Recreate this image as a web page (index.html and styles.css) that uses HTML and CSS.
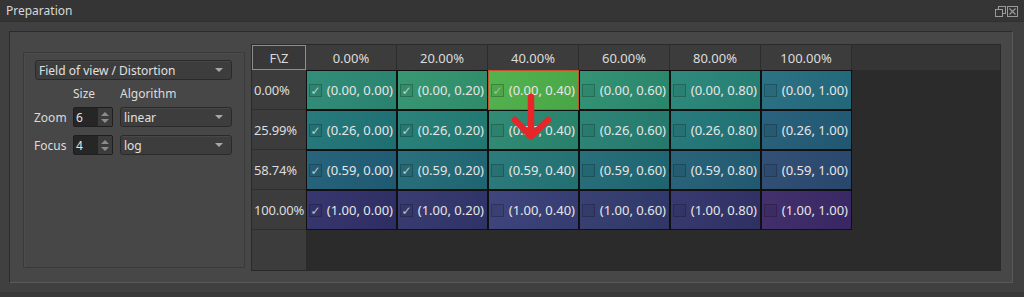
FILE: index.html
```html
<!DOCTYPE html>
<html lang="en">
<head>
    <meta charset="UTF-8">
    <title>Preparation</title>
    <link rel="stylesheet" href="styles.css">
</head>
<body>
<div class="dock">
    <div class="title-bar">
        <span class="title">Preparation</span>
        <div class="title-btns">
            <svg width="11" height="11" viewBox="0 0 11 11"><rect x="3.5" y="0.5" width="7" height="7" fill="none" stroke="#9a9a9a"/><rect x="0.5" y="3.5" width="7" height="7" fill="#353535" stroke="#9a9a9a"/></svg>
            <svg width="11" height="11" viewBox="0 0 11 11"><rect x="0.5" y="0.5" width="10" height="10" fill="none" stroke="#9a9a9a"/><path d="M2.5 2.5 L8.5 8.5 M8.5 2.5 L2.5 8.5" stroke="#9a9a9a" stroke-width="1.2"/></svg>
        </div>
    </div>
    <div class="dock-body">
        <div class="frame">
            <!-- settings -->
            <div class="group">
                <div class="combo wide"><span>Field of view / Distortion</span><i class="caret"></i></div>
                <div class="row head">
                    <span class="lbl"></span>
                    <span class="head-size">Size</span>
                    <span>Algorithm</span>
                </div>
                <div class="row zoom">
                    <span class="lbl">Zoom</span>
                    <div class="spin"><span>6</span><div class="spin-btns"><i class="up"></i><i class="down"></i></div></div>
                    <div class="combo"><span>linear</span><i class="caret"></i></div>
                </div>
                <div class="row focus">
                    <span class="lbl">Focus</span>
                    <div class="spin"><span>4</span><div class="spin-btns"><i class="up"></i><i class="down"></i></div></div>
                    <div class="combo"><span>log</span><i class="caret"></i></div>
                </div>
            </div>

            <!-- grid of previews -->
            <div class="table-view">
                <div class="corner">F\Z</div>
                <div class="hcell">0.00%</div>
                <div class="hcell">20.00%</div>
                <div class="hcell">40.00%</div>
                <div class="hcell">60.00%</div>
                <div class="hcell">80.00%</div>
                <div class="hcell">100.00%</div>
                <div class="hfill"></div>

                <div class="rhead">0.00%</div>
                <div class="cell" style="--c:#2b8a74"><i class="chk on">✓</i><span>(0.00, 0.00)</span></div>
                <div class="cell" style="--c:#31946e"><i class="chk on">✓</i><span>(0.00, 0.20)</span></div>
                <div class="cell sel" style="--c:#4db04a"><i class="chk on dim">✓</i><span>(0.00, 0.40)</span></div>
                <div class="cell" style="--c:#2c8e70"><i class="chk"></i><span>(0.00, 0.60)</span></div>
                <div class="cell" style="--c:#278578"><i class="chk"></i><span>(0.00, 0.80)</span></div>
                <div class="cell" style="--c:#246d80"><i class="chk"></i><span>(0.00, 1.00)</span></div>
                <div class="fill"></div>

                <div class="rhead">25.99%</div>
                <div class="cell" style="--c:#1f7578"><i class="chk on">✓</i><span>(0.26, 0.00)</span></div>
                <div class="cell" style="--c:#227e76"><i class="chk on">✓</i><span>(0.26, 0.20)</span></div>
                <div class="cell" style="--c:#2a8870"><i class="chk"></i><span>(0.26, 0.40)</span></div>
                <div class="cell" style="--c:#268072"><i class="chk"></i><span>(0.26, 0.60)</span></div>
                <div class="cell" style="--c:#217678"><i class="chk"></i><span>(0.26, 0.80)</span></div>
                <div class="cell" style="--c:#225c78"><i class="chk"></i><span>(0.26, 1.00)</span></div>
                <div class="fill"></div>

                <div class="rhead">58.74%</div>
                <div class="cell" style="--c:#205e78"><i class="chk on">✓</i><span>(0.59, 0.00)</span></div>
                <div class="cell" style="--c:#216a78"><i class="chk on">✓</i><span>(0.59, 0.20)</span></div>
                <div class="cell" style="--c:#247678"><i class="chk"></i><span>(0.59, 0.40)</span></div>
                <div class="cell" style="--c:#206a76"><i class="chk"></i><span>(0.59, 0.60)</span></div>
                <div class="cell" style="--c:#225e76"><i class="chk"></i><span>(0.59, 0.80)</span></div>
                <div class="cell" style="--c:#2b4a72"><i class="chk"></i><span>(0.59, 1.00)</span></div>
                <div class="fill"></div>

                <div class="rhead">100.00%</div>
                <div class="cell" style="--c:#30306a"><i class="chk on">✓</i><span>(1.00, 0.00)</span></div>
                <div class="cell" style="--c:#32356c"><i class="chk on">✓</i><span>(1.00, 0.20)</span></div>
                <div class="cell" style="--c:#383f78"><i class="chk"></i><span>(1.00, 0.40)</span></div>
                <div class="cell" style="--c:#323a6e"><i class="chk"></i><span>(1.00, 0.60)</span></div>
                <div class="cell" style="--c:#31336a"><i class="chk"></i><span>(1.00, 0.80)</span></div>
                <div class="cell" style="--c:#3b2968"><i class="chk"></i><span>(1.00, 1.00)</span></div>
                <div class="fill"></div>

                <div class="rhead empty"></div>

                <svg class="arrow" width="46" height="56" viewBox="0 0 46 56">
                    <path d="M21 7 V46 M5 30 L21 46.5 L38 30" fill="none" stroke="#e8262a" stroke-width="6.5" stroke-linecap="round" stroke-linejoin="round"/>
                </svg>
            </div>
        </div>
    </div>
</div>
</body>
</html>
```

FILE: styles.css
```css
*{margin:0;padding:0;box-sizing:border-box;}
html,body{width:1024px;height:297px;overflow:hidden;}
body{
    background:#393939;
    font-family:"Noto Sans","DejaVu Sans",sans-serif;
    font-size:12px;
    color:#dcdcdc;
}
.dock{height:292px;background:#404040;display:flex;flex-direction:column;}
.title-bar{
    height:22px;
    background:#353535;
    border-bottom:1px solid #303030;
    display:flex;
    align-items:center;
    justify-content:space-between;
    padding:0 6px 0 6px;
}
.title{color:#d8d8d8;}
.title-btns{display:flex;gap:1px;margin-top:1px;}
.title-btns svg{display:block;}

.dock-body{flex:1;padding:9px 11px 9px 9px;}
.frame{
    height:100%;
    border:1px solid;
    border-color:#2c2c2c #595959 #595959 #2c2c2c;
    background:#474747;
    display:flex;
    align-items:flex-start;
    gap:6px;
    padding:12px 11px 0 13px;
}

/* left settings box */
.group{
    width:222px;
    height:216px;
    margin-top:8px;
    border:1px solid #3a3a3a;
    box-shadow:inset 1px 1px 0 #4c4c4c;
    padding:7px 12px 0 11px;
}
.combo{
    height:20px;
    border:1px solid #2a2a2a;
    border-radius:3px;
    background:#3d3d3d;
    box-shadow:inset 0 1px 0 #474747;
    display:flex;
    align-items:center;
    justify-content:space-between;
    padding:0 8px 0 3px;
    width:112px;
    color:#e0e0e0;
}
.combo.wide{width:197px;}
.caret{
    width:0;height:0;
    border-left:4px solid transparent;
    border-right:4px solid transparent;
    border-top:4px solid #a8a8a8;
}
.row{display:flex;align-items:center;height:20px;}
.row.head{margin-top:3px;}
.row.zoom{margin-top:4px;}
.row.focus{margin-top:8px;}
.lbl{width:38px;margin-left:-1px;margin-right:1px;}
.head-size{width:47px;}
.spin{
    width:40px;
    height:20px;
    margin-right:7px;
    border:1px solid #1e1e1e;
    border-radius:2px;
    background:#262626;
    display:flex;
    align-items:center;
    justify-content:space-between;
    padding-left:2px;
    color:#e4e4e4;
}
.spin-btns{
    width:14px;height:18px;
    background:#3c3c3c;
    display:flex;flex-direction:column;align-items:center;justify-content:center;gap:3px;
}
.spin-btns i{width:0;height:0;border-left:4px solid transparent;border-right:4px solid transparent;}
.spin-btns .up{border-bottom:4px solid #8c8c8c;}
.spin-btns .down{border-top:4px solid #8c8c8c;}

/* table */
.table-view{
    position:relative;
    width:750px;
    height:227px;
    border:1px solid #2a2a2a;
    background:#2b2b2b;
    display:grid;
    grid-template-columns:54px repeat(6,91px) 1fr;
    grid-template-rows:25px repeat(4,40px) 1fr;
    font-size:13px;
}
.corner{
    border:1px solid #8e8e8e;
    background:#383838;
    display:flex;align-items:center;justify-content:center;
}
.hcell{
    background:#3c3c3c;
    border-right:1px solid #2c2c2c;
    display:flex;align-items:center;justify-content:center;
}
.hfill{background:#353535;}
.rhead{
    background:#3c3c3c;
    border-bottom:1px solid #2e2e2e;
    display:flex;align-items:center;
    padding-left:2px;
    letter-spacing:-0.2px;
}
.rhead.empty{border-bottom:none;}
.cell{
    border:1px solid #101010;
    background:linear-gradient(120deg,rgba(255,255,255,0.04),rgba(0,0,0,0.06)),var(--c);
    display:flex;align-items:center;justify-content:space-between;
    padding:0 3px 0 2px;
    color:#e6e6e6;
}
.cell.sel{border-color:#c4502c;}
.chk{
    width:13px;height:13px;
    border:1px solid rgba(0,0,0,0.2);
    background:rgba(0,0,0,0.06);
    font-style:normal;
    font-size:12px;
    line-height:11px;
    text-align:center;
    color:rgba(225,230,228,0.8);
}
.chk.dim{color:rgba(225,230,228,0.5);}
.arrow{position:absolute;left:258px;top:45px;}
```
